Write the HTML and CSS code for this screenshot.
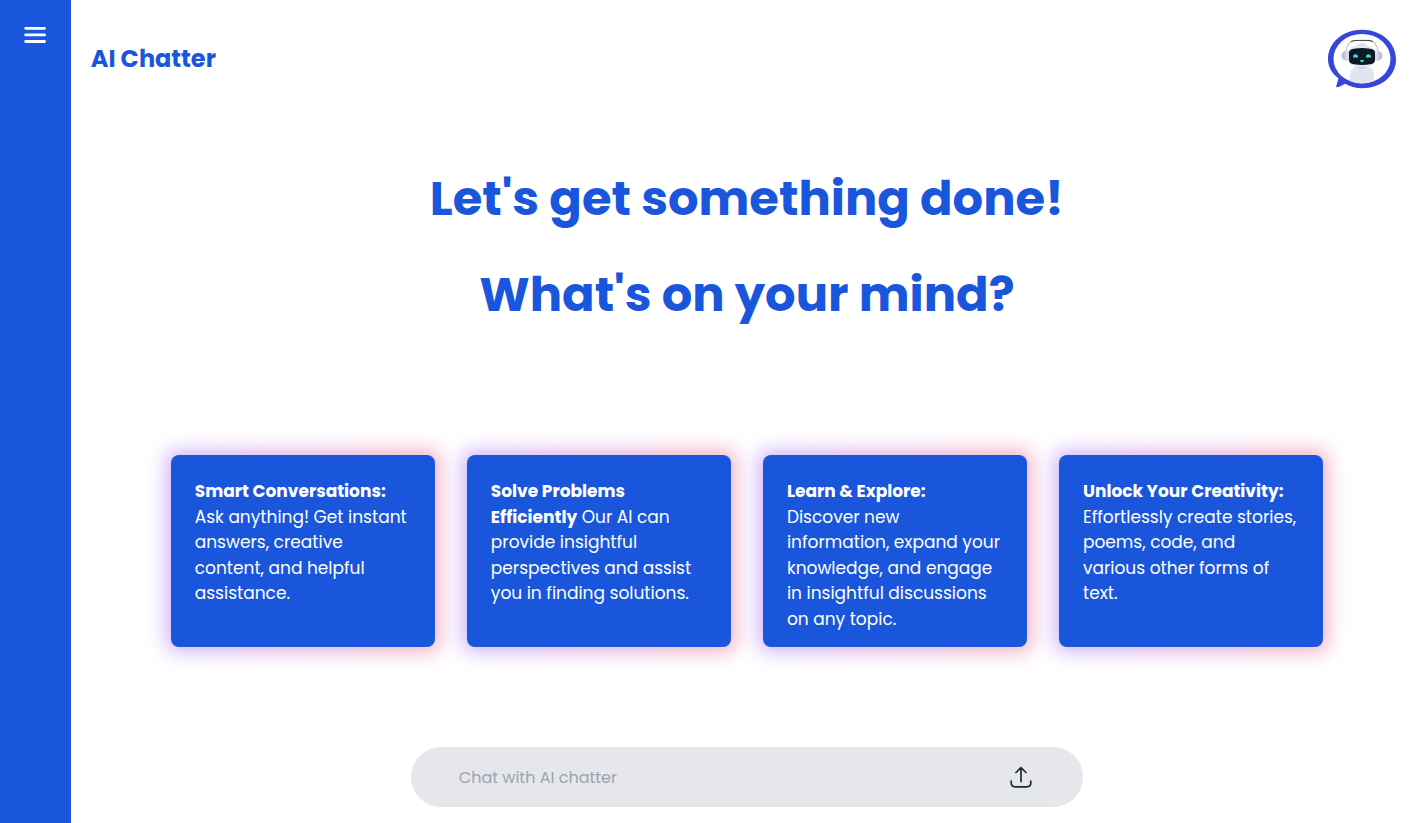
FILE: index.html
```html
<!DOCTYPE html>
<html lang="en">
<head>
  <meta charset="utf-8">
  <meta name="viewport" content="width=device-width, initial-scale=1">
  <title>AI Chatter</title>
  <link rel="stylesheet" href="styles.css">
</head>
<body>
  <div class="app">
    <aside class="sidebar">
      <button class="menu-button" type="button" aria-label="Open menu">
        <svg viewBox="0 0 24 24" width="24" height="24" fill="none" stroke="currentColor" stroke-width="2.8" stroke-linecap="round"><path d="M2.700 5.300h18.800M2.700 11.900h18.800M2.700 18.500h18.800"/></svg>
      </button>
    </aside>
    <main class="main">
      <header class="header">
        <h2 class="brand">AI Chatter</h2>
        <svg class="avatar" viewBox="0 -0.7 70 61" width="70" height="61" role="img" aria-label="Robot avatar">
          <path d="M35 1C54 1 69 13.500 69 30.500S54 59.500 35 59.500C29 59.500 22.500 57.500 18 55C15 57 12 58.300 9 58.500L11.500 49.500C5 45 1 38 1 30.500C1 13.500 16 1 35 1Z" fill="#3546dc"/>
          <ellipse cx="35" cy="30" rx="28.500" ry="24.800" fill="#fff"/>
          <path d="M23 52.200V47Q23 38 31 38H39Q47 38 47 47V52.200Q35 57 23 52.200Z" fill="#e2e5ef"/>
          <path d="M30 35H40V38Q35 43 30 38Z" fill="#cdd3df"/>
          <path d="M30 16Q35 12.500 40 16V22H30Z" fill="#dce1ea"/>
          <rect x="21.500" y="17" width="27" height="21" rx="8" fill="#e5e8f0"/>
          <path d="M19 25V22Q21 12 28 12" fill="none" stroke="#bdc3ce" stroke-width="1.200"/>
          <path d="M42 12Q49 12 51 22V25" fill="none" stroke="#bdc3ce" stroke-width="1.200"/>
          <path d="M24 12.800Q27 11.700 30 11.700H40Q43 11.700 46 12.800" fill="none" stroke="#344047" stroke-width="1"/>
          <path d="M20 22V32Q14.500 31.500 14.500 27T20 22Z" fill="#bcc2d2"/>
          <path d="M50 22V32Q55.500 31.500 55.500 27T50 22Z" fill="#bcc2d2"/>
          <rect x="18.500" y="22" width="3.500" height="10" rx="1" fill="#d9dde8"/>
          <rect x="48" y="22" width="3.500" height="10" rx="1" fill="#d9dde8"/>
          <path d="M22 24Q22 20.500 27 20Q35 18.800 43 20Q48 20.500 48 24V31Q48 35 43 35.600Q35 36.800 27 35.600Q22 35 22 31Z" fill="#0b1b23"/>
          <path d="M26 28.800Q26 25.500 28.500 25.500T31 28.800Z" fill="#45d9df"/>
          <path d="M39 28.800Q39 25.500 41.500 25.500T44 28.800Z" fill="#45d9df"/>
          <path d="M33 31.200H37Q36.500 33.500 35 33.500T33 31.200Z" fill="#45d9df"/>
        </svg>
      </header>
      <section class="hero">
        <h1 class="hero-title">Let's get something done!</h1>
        <h1 class="hero-title">What's on your mind?</h1>
      </section>
      <section class="cards">
        <article class="card"><p class="card-text"><strong>Smart Conversations:</strong><br>Ask anything! Get instant answers, creative content, and helpful assistance.</p></article>
        <article class="card"><p class="card-text"><strong>Solve Problems Efficiently</strong> Our AI can provide insightful perspectives and assist you in finding solutions.</p></article>
        <article class="card"><p class="card-text"><strong>Learn &amp; Explore:</strong><br>Discover new information, expand your knowledge, and engage in insightful discussions on any topic.</p></article>
        <article class="card"><p class="card-text"><strong>Unlock Your Creativity:</strong><br>Effortlessly create stories, poems, code, and various other forms of text.</p></article>
      </section>
      <form class="composer">
        <input class="composer-input" type="text" placeholder="Chat with AI chatter" aria-label="Chat with AI chatter">
        <button class="send-button" type="button" aria-label="Send message">
          <svg viewBox="0 0 24 24" width="24" height="24" fill="none" stroke="currentColor" stroke-width="1.700" stroke-linecap="round" stroke-linejoin="round"><path d="M12 16.500V3M7 7.500l5-4.800L17 7.500M2.200 16v1.800q0 4 4 4h11.600q4 0 4-4v-1.800"/></svg>
        </button>
      </form>
    </main>
  </div>
</body>
</html>
```
FILE: styles.css
```css
* {
  box-sizing: border-box;
  margin: 0;
  padding: 0;
}

body {
  background: #fff;
  color: #1a56db;
  font-family: Poppins, Inter, "Open Sans", sans-serif;
}

button {
  border: 0;
  background: transparent;
  cursor: pointer;
}

.app {
  display: flex;
  min-height: 100vh;
}

.sidebar {
  flex: 0 0 5%;
  padding-top: 23px;
  background: #1a56db;
  text-align: center;
}

.menu-button {
  color: #fff;
  line-height: 0;
}

.main {
  display: flex;
  flex: 1;
  min-width: 0;
  flex-direction: column;
  align-items: center;
  padding: 0 0 16px 8px;
}

.header {
  display: flex;
  align-items: center;
  justify-content: space-between;
  align-self: stretch;
  padding: 28px 18px 0 12px;
}

.brand {
  font-size: 24px;
  font-weight: 700;
}

.hero {
  margin: 62px 0 12px;
  padding: 0 16px;
  text-align: center;
}

.hero-title {
  font-size: 48px;
  font-weight: 700;
  line-height: 96px;
}

.cards {
  display: grid;
  grid-template-columns: repeat(auto-fit, minmax(240px, 1fr));
  gap: 32px;
  width: calc(100% - 184px);
  margin: auto 0;
  isolation: isolate;
}

.card {
  position: relative;
  min-height: 192px;
  padding: 24px;
  border-radius: 8px;
  background: #1a56db;
  color: #fff;
}

.card::before {
  content: "";
  position: absolute;
  z-index: -1;
  inset: -4px;
  border-radius: 8px;
  background: linear-gradient(90deg, #c9b0fa, #f2a8c0);
  filter: blur(10px);
}

.card-text {
  margin-bottom: -12px;
  font-size: 17px;
  line-height: 1.5;
}

.composer {
  display: flex;
  align-items: center;
  width: calc(50% + 4px);
  min-height: 60px;
  padding: 0 48px;
  border-radius: 30px;
  background: #e5e7eb;
}

.composer-input {
  flex: 1;
  min-width: 0;
  border: 0;
  outline: 0;
  background: transparent;
  color: #1f2a37;
  font: inherit;
  font-size: 16px;
}

.composer-input::placeholder {
  color: #9ca3af;
}

.send-button {
  padding: 0 2px;
  color: #1f2a37;
  line-height: 0;
}
```
